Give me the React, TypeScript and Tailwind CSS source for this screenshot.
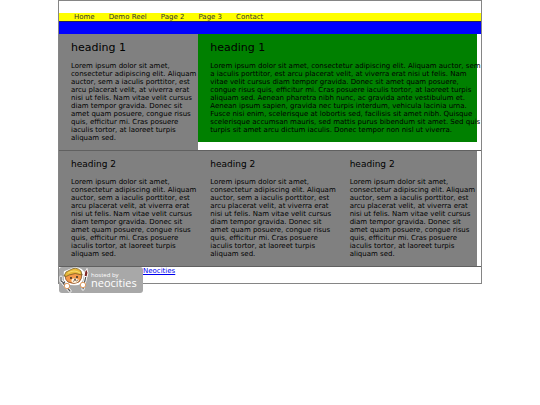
const links = ["Home", "Demo Reel", "Page 2", "Page 3", "Contact"];

const shortText = `Lorem ipsum dolor sit amet,
consectetur adipiscing elit. Aliquam
auctor, sem a iaculis porttitor, est
arcu placerat velit, at viverra erat
nisi ut felis. Nam vitae velit cursus
diam tempor gravida. Donec sit
amet quam posuere, congue risus
quis, efficitur mi. Cras posuere
iaculis tortor, at laoreet turpis
aliquam sed.`;

const longText = `Lorem ipsum dolor sit amet, consectetur adipiscing elit. Aliquam auctor, sem
a iaculis porttitor, est arcu placerat velit, at viverra erat nisi ut felis. Nam
vitae velit cursus diam tempor gravida. Donec sit amet quam posuere,
congue risus quis, efficitur mi. Cras posuere iaculis tortor, at laoreet turpis
aliquam sed. Aenean pharetra nibh nunc, ac gravida ante vestibulum et.
Aenean ipsum sapien, gravida nec turpis interdum, vehicula lacinia urna.
Fusce nisi enim, scelerisque at lobortis sed, facilisis sit amet nibh. Quisque
scelerisque accumsan mauris, sed mattis purus bibendum sit amet. Sed quis
turpis sit amet arcu dictum iaculis. Donec tempor non nisl ut viverra.`;

interface ColumnProps {
  title: string;
  text: string;
  className: string;
}

function Column({ title, text, className }: ColumnProps) {
  return (
    <section className={`pb-2 pl-3 ${className}`}>
      <h2 className="leading-3">{title}</h2>
      <p className="mt-2 whitespace-pre text-[7px] leading-[8px]">{text}</p>
    </section>
  );
}

function NeocitiesBadge() {
  return (
    <svg width="84" height="26" viewBox="0 0 84 26" role="img" aria-label="Hosted by Neocities">
      <rect width="84" height="26" rx="3" fill="#a8a8a8" />
      {/* wrench and brush */}
      <g fill="none" strokeLinecap="round" strokeLinejoin="round">
        <path d="M2 10v4l3 2 2-3M4 16l7 8" stroke="#fff" strokeWidth="3" />
        <path d="M2 10v4l3 2 2-3M4 16l7 8" stroke="#555" strokeWidth="1.2" />
        <path d="M27 9l-3 13" stroke="#fff" strokeWidth="3" />
        <path d="M27 9l-3 13" stroke="#555" strokeWidth="1.2" />
        <path d="M28 2q2 4 0 8l-3-1q0-5 3-7z" fill="#7c2626" stroke="#fff" strokeWidth="1" />
      </g>
      {/* head and cap */}
      <path
        d="M6 9L6 5l5-2q6-3 11 0l2 2-1 7q-2 6-8 5-7 0-9-5z"
        fill="#fff"
        stroke="#fff"
        strokeWidth="2.4"
        strokeLinejoin="round"
      />
      <path d="M6 8q0 5 3 7 6 3 11 0 3-3 3-8-8-4-17 1z" fill="#f39a4b" stroke="#704022" strokeWidth="0.7" />
      <path d="M13 12l3-1 4 2q-1 3-5 3-4-1-2-4z" fill="#fff3df" />
      <path d="M5 9l2-4 4-2q6-4 11 1l1 4q-7-3-13 0-2 2-5 1z" fill="#e8b83b" stroke="#69501b" strokeWidth="0.7" />
      <path d="M9 6q6-4 12 0" fill="none" stroke="#f7dc6b" strokeWidth="1" />
      <circle cx="12" cy="11" r="0.9" fill="#222" />
      <circle cx="18" cy="10" r="0.9" fill="#222" />
      <path d="M15 12h2l-1 1zM14 14q1 1 2-1 1 2 3 0" fill="none" stroke="#4b3524" strokeWidth="0.6" />
      <circle cx="8" cy="19" r="2.7" fill="#fff" stroke="#d9863f" strokeWidth="0.8" />
      <circle cx="24" cy="18" r="2.7" fill="#fff" stroke="#d9863f" strokeWidth="0.8" />
      <text x="32" y="10" fill="#fff" fontSize="6" fontFamily="Open Sans, sans-serif">
        hosted by
      </text>
      <text x="32" y="20" fill="#fff" fontSize="11" fontFamily="Open Sans, sans-serif">
        neocities
      </text>
    </svg>
  );
}

export default function App() {
  return (
    <div className="min-h-screen bg-white px-[58px] font-['DejaVu_Sans',sans-serif] text-black">
      <div className="border border-[#858585]">
        <nav className="mt-3 flex h-2 items-center gap-[14px] bg-[#ffff00] pl-[15px] text-[7px] leading-[8px] text-[#333]">
          {links.map((link) => (
            <a key={link} href="#">
              {link}
            </a>
          ))}
        </nav>
        <header className="h-[13px] border-t border-[#202060] bg-[#0000ff]" />
        <main>
          <div className="grid grid-cols-3 items-start pr-1">
            <Column title="heading 1" text={shortText} className="bg-[#808080] pt-2 text-[11px]" />
            <Column title="heading 1" text={longText} className="col-span-2 bg-[#008000] pt-2 text-[11px]" />
          </div>
          <div className="border-y border-[#606060] pr-1">
            <div className="grid grid-cols-3 bg-[#808080] text-[9px]">
              <Column title="heading 2" text={shortText} className="pt-[7px]" />
              <Column title="heading 2" text={shortText} className="pt-[7px]" />
              <Column title="heading 2" text={shortText} className="pt-[7px]" />
            </div>
          </div>
        </main>
        <footer className="flex h-4 items-start text-[7px] leading-[8px]">
          <NeocitiesBadge />
          <a href="#" className="text-[#0000ee] underline">
            Neocities
          </a>
        </footer>
      </div>
    </div>
  );
}
